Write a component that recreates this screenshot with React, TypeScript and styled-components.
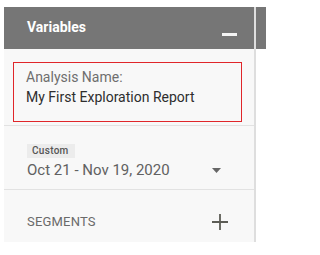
import React from "react";
import styled, { createGlobalStyle } from "styled-components";

const GlobalStyle = createGlobalStyle`
  html, body {
    margin: 0;
    padding: 0;
    background: #ffffff;
  }
  body {
    font-family: Roboto, "Liberation Sans", Arial, sans-serif;
    -webkit-font-smoothing: antialiased;
  }
`;

const Page = styled.div`
  display: flex;
  align-items: flex-start;
  padding: 7px 0 0 4px;
  width: 266px;
  height: 255px;
  box-sizing: border-box;
  overflow: hidden;
`;

const Panel = styled.aside`
  width: 250px;
  flex-shrink: 0;
  background: #f8f8f8;
  border-right: 2px solid #dedede;
  display: flex;
  flex-direction: column;
`;

const Header = styled.div`
  height: 42px;
  background: #767676;
  display: flex;
  align-items: center;
  justify-content: space-between;
  padding: 0 17px 0 23px;
  box-sizing: border-box;
`;

const Title = styled.h2`
  margin: 0 0 2px;
  font-size: 14px;
  font-weight: 700;
  color: #ffffff;
  line-height: 20px;
`;

const MinimizeButton = styled.button`
  border: 0;
  padding: 0;
  background: transparent;
  width: 15px;
  height: 20px;
  display: flex;
  align-items: flex-end;
  margin-top: 10px;
  cursor: pointer;

  &::after {
    content: "";
    display: block;
    width: 15px;
    height: 3px;
    margin-bottom: 7px;
    background: #f4f4f4;
  }
`;

const Section = styled.section<{ $pad: string; $divider?: boolean }>`
  display: flex;
  flex-direction: column;
  align-items: stretch;
  padding: ${({ $pad }) => $pad};
  border-bottom: ${({ $divider }) => ($divider ? "1px solid #e2e2e2" : "none")};
`;

const NameBox = styled.div`
  border: 1px solid #e0262a;
  padding: 4px 12px 14px;
  line-height: 20px;
  font-size: 14px;
`;

const NameLabel = styled.div`
  color: #6e6e6e;
`;

const NameValue = styled.div`
  color: #2e2e2e;
`;

const Chip = styled.span`
  display: block;
  align-self: flex-start;
  background: #ececec;
  color: #555555;
  font-size: 10px;
  font-weight: 500;
  letter-spacing: 0.3px;
  line-height: 14px;
  padding: 0 6px 0 5px;
  margin-bottom: 2px;
`;

const Row = styled.div<{ $right: number }>`
  display: flex;
  align-items: center;
  justify-content: space-between;
  padding-right: ${({ $right }) => $right}px;
`;

const DateText = styled.div`
  font-size: 15px;
  line-height: 20px;
  color: #616161;
`;

const SectionLabel = styled.div`
  font-size: 13px;
  line-height: 20px;
  color: #6a6a6a;
  letter-spacing: 0.2px;
`;

const IconButton = styled.button`
  border: 0;
  padding: 0;
  background: transparent;
  display: flex;
  cursor: pointer;
`;

const NextColumn = styled.div`
  flex: 1;
`;

const NextHeader = styled.div`
  height: 42px;
  background: #767676;
`;

export default function App() {
  return (
    <>
      <GlobalStyle />
      <Page>
        <Panel>
          <Header>
            <Title>Variables</Title>
            <MinimizeButton aria-label="Minimize" />
          </Header>

          <Section $pad="13px 12px 3px 9px" $divider>
            <NameBox>
              <NameLabel>Analysis Name:</NameLabel>
              <NameValue>My First Exploration Report</NameValue>
            </NameBox>
          </Section>

          <Section $pad="18px 0 9px 23px" $divider>
            <Chip>Custom</Chip>
            <Row $right={33}>
              <DateText>Oct 21 - Nov 19, 2020</DateText>
              <IconButton aria-label="Choose date range">
                <svg width="9" height="5" viewBox="0 0 9 5">
                  <path d="M0 0h9L4.5 5z" fill="#666666" />
                </svg>
              </IconButton>
            </Row>
          </Section>

          <Section $pad="22px 0 10px 23px">
            <Row $right={26}>
              <SectionLabel>SEGMENTS</SectionLabel>
              <IconButton aria-label="Add segment">
                <svg width="16" height="16" viewBox="0 0 16 16">
                  <path
                    d="M8 0v16M0 8h16"
                    stroke="#5c5c55"
                    strokeWidth="1.8"
                    fill="none"
                  />
                </svg>
              </IconButton>
            </Row>
          </Section>
        </Panel>
        <NextColumn>
          <NextHeader />
        </NextColumn>
      </Page>
    </>
  );
}
